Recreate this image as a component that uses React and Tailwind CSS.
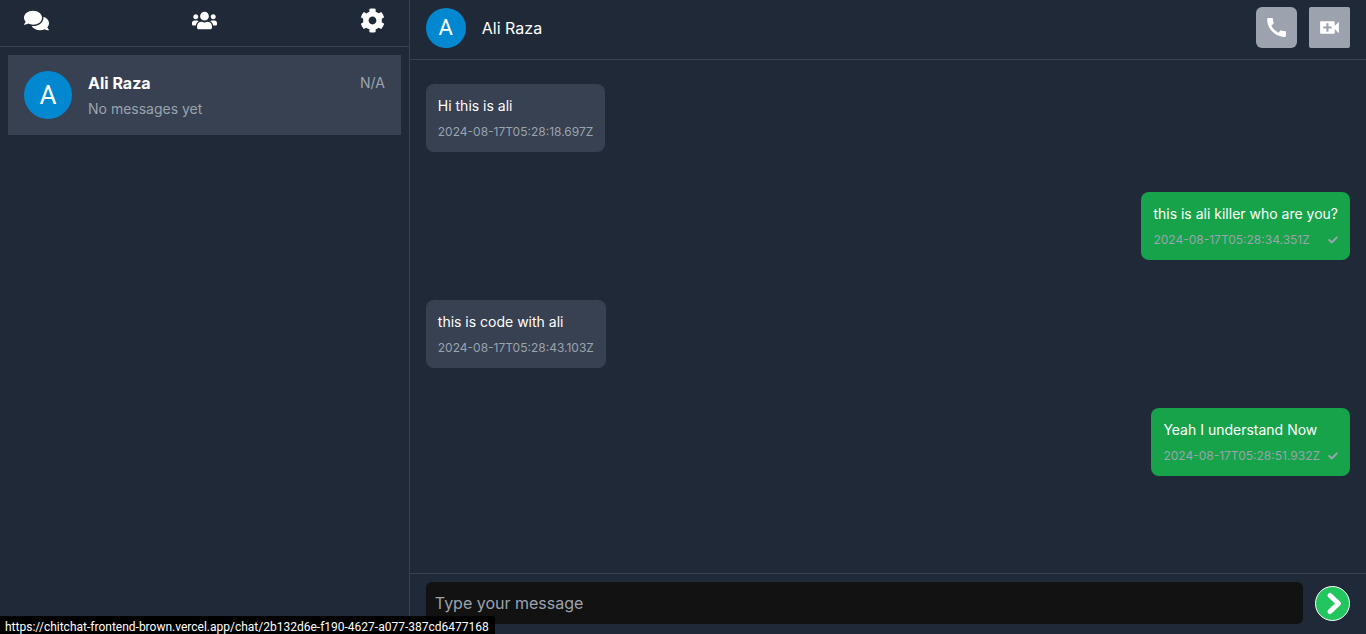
import { FaComments, FaUsers, FaCog, FaCheck } from "react-icons/fa";
import { MdCall } from "react-icons/md";

const messages = [
  { id: 1, text: "Hi this is ali", time: "2024-08-17T05:28:18.697Z", own: false },
  { id: 2, text: "this is ali killer who are you?", time: "2024-08-17T05:28:34.351Z", own: true },
  { id: 3, text: "this is code with ali", time: "2024-08-17T05:28:43.103Z", own: false },
  { id: 4, text: "Yeah I understand Now", time: "2024-08-17T05:28:51.932Z", own: true },
];

function Avatar({ large }) {
  return (
    <span
      className={
        large
          ? "flex size-12 shrink-0 items-center justify-center rounded-full bg-[#0288d1] font-['Roboto',sans-serif] text-[26px] leading-none text-white"
          : "flex size-10 shrink-0 items-center justify-center rounded-full bg-[#0288d1] font-['Roboto',sans-serif] text-[22px] leading-none text-white"
      }
    >
      A
    </span>
  );
}

function VideoIcon() {
  return (
    <svg viewBox="0 0 24 24" className="size-[25px]" fill="currentColor" aria-hidden="true">
      <path d="M17 10.5V7c0-.55-.45-1-1-1H4c-.55 0-1 .45-1 1v10c0 .55.45 1 1 1h12c.55 0 1-.45 1-1v-3.5l4 4v-11l-4 4zM14 13h-3v3H9v-3H6v-2h3V8h2v3h3v2z" />
    </svg>
  );
}

function SendIcon() {
  return (
    <svg
      viewBox="0 0 33 33"
      className="size-full"
      fill="none"
      stroke="currentColor"
      strokeWidth="5"
      strokeLinecap="round"
      strokeLinejoin="round"
      aria-hidden="true"
    >
      <path d="M14 8.5l8.5 8-8.5 8" />
    </svg>
  );
}

function Sidebar() {
  return (
    <aside className="w-[30%] shrink-0 border-r border-[#374151]">
      <nav className="flex h-[47px] justify-between border-b border-[#374151] px-6 pt-2">
        <button type="button" aria-label="Chats" className="h-6">
          <FaComments className="size-[25px]" />
        </button>
        <button type="button" aria-label="Groups" className="h-6">
          <FaUsers className="size-[25px]" />
        </button>
        <button type="button" aria-label="Settings" className="h-6">
          <FaCog className="size-[25px]" />
        </button>
      </nav>
      <div className="p-2">
        <a
          href="/chat/2b132d6e-f190-4627-a077-387cd6477168"
          className="flex h-20 items-center gap-4 bg-[#374151] px-4"
        >
          <Avatar large />
          <div className="min-w-0 flex-1">
            <div className="flex items-center justify-between">
              <h2 className="text-base leading-7 font-bold">Ali Raza</h2>
              <span className="text-sm text-[#9ca3af]">N/A</span>
            </div>
            <p className="text-sm leading-6 text-[#9ca3af]">No messages yet</p>
          </div>
        </a>
      </div>
    </aside>
  );
}

function Message({ text, time, own }) {
  return (
    <li className={own ? "flex justify-end" : "flex justify-start"}>
      <div className={own ? "rounded-lg bg-[#16a34a] p-3" : "rounded-lg bg-[#374151] p-3"}>
        <p className="text-sm">{text}</p>
        <div className="mt-2 flex items-center justify-between gap-2 text-xs text-[#9ca3af]">
          <time dateTime={time}>{time}</time>
          {own && <FaCheck className="size-[10px]" aria-label="Sent" />}
        </div>
      </div>
    </li>
  );
}

export default function App() {
  return (
    <div className="relative flex h-screen overflow-hidden bg-[#1f2937] font-['Inter',sans-serif] text-white">
      <Sidebar />
      <main className="flex min-w-0 flex-1 flex-col">
        <header className="flex h-[60px] shrink-0 items-center justify-between border-b border-[#374151] px-4 pb-1">
          <div className="flex items-center gap-4">
            <Avatar />
            <h1 className="text-base">Ali Raza</h1>
          </div>
          <div className="flex gap-3">
            <button
              type="button"
              aria-label="Voice call"
              className="flex items-center justify-center rounded-md bg-[#9ca3af] p-2"
            >
              <MdCall className="size-[25px]" />
            </button>
            <button
              type="button"
              aria-label="Video call"
              className="flex items-center justify-center rounded-xs bg-[#9ca3af] p-2"
            >
              <VideoIcon />
            </button>
          </div>
        </header>
        <ul className="flex min-h-0 flex-1 flex-col gap-10 overflow-hidden px-4 pt-6">
          {messages.map((m) => (
            <Message key={m.id} text={m.text} time={m.time} own={m.own} />
          ))}
        </ul>
        <form
          className="flex shrink-0 items-center gap-3 border-t border-[#374151] px-4 pt-2 pb-[10px]"
          onSubmit={(e) => e.preventDefault()}
        >
          <input
            type="text"
            aria-label="Message"
            placeholder="Type your message"
            className="h-[42px] min-w-0 flex-1 rounded-md bg-[#121212] px-[9px] text-base placeholder:text-[#9ca3af] focus:outline-none"
          />
          <button
            type="submit"
            aria-label="Send"
            className="size-[35px] rounded-full border border-white bg-[#22c55e]"
          >
            <SendIcon />
          </button>
        </form>
      </main>
      <div className="absolute bottom-0 left-0 rounded-tr-xs bg-black pt-1 pr-[6px] pl-[5px] font-['Roboto',sans-serif] text-xs leading-[14px]">
        https://chitchat-frontend-brown.vercel.app/chat/2b132d6e-f190-4627-a077-387cd6477168
      </div>
    </div>
  );
}
